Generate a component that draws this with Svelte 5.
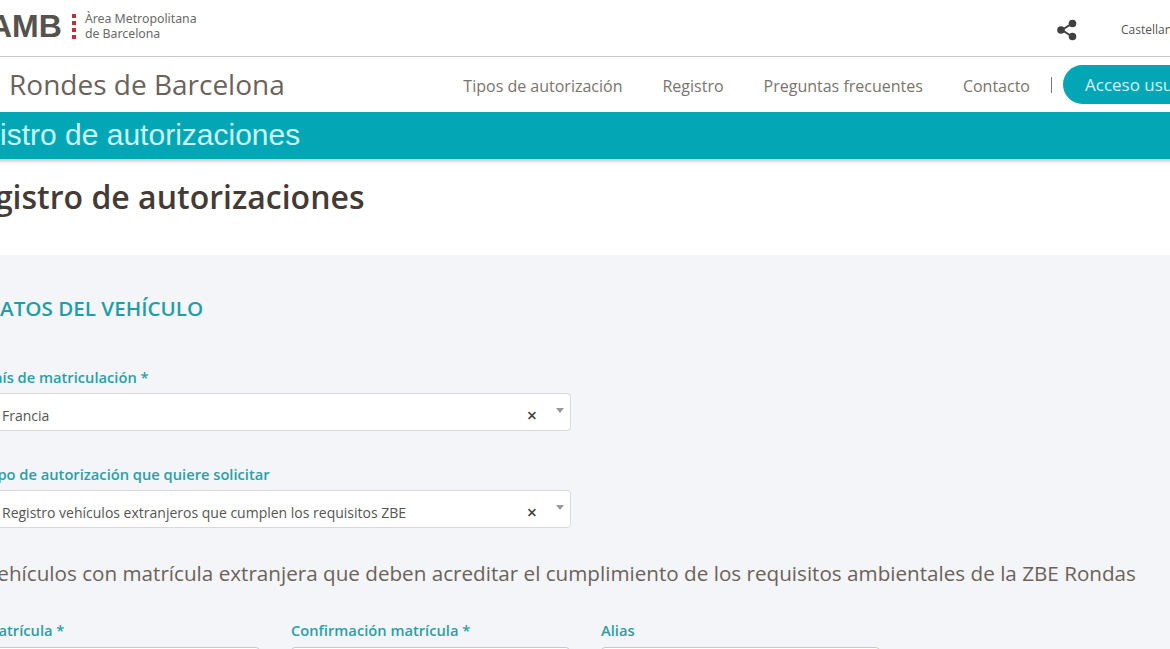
<script>
  const links = ['Tipos de autorización', 'Registro', 'Preguntas frecuentes', 'Contacto'];
  const selects = [
    { label: 'País de matriculación *', value: 'Francia' },
    { label: 'Tipo de autorización que quiere solicitar', value: 'Registro vehículos extranjeros que cumplen los requisitos ZBE' }
  ];
  const fields = ['Matrícula *', 'Confirmación matrícula *', 'Alias'];
</script>

<div class="page">
  <header class="top">
    <div class="logo">
      <span class="amb">AMB</span>
      <span class="dots"><i></i><i></i><i></i><i></i></span>
      <span class="amb-name">Àrea Metropolitana<br />de Barcelona</span>
    </div>
    <div class="top-right">
      <svg class="share" width="22" height="24" viewBox="0 0 22 24">
        <path d="M16 5.5 6 12l10 6.500" fill="none" stroke="#404040" stroke-width="2" />
        <circle cx="16.500" cy="5.500" r="3.800" fill="#404040" />
        <circle cx="5" cy="12" r="3.800" fill="#404040" />
        <circle cx="16.500" cy="18.500" r="3.800" fill="#404040" />
      </svg>
      <span class="lang">Castellano</span>
    </div>
  </header>

  <nav class="nav">
    <div class="brand">Rondes de Barcelona</div>
    <div class="links">
      {#each links as link}
        <span class="link">{link}</span>
      {/each}
      <span class="sep"></span>
      <span class="access">Acceso usuarios</span>
    </div>
  </nav>

  <div class="banner">Registro de autorizaciones</div>

  <section class="intro">
    <h1>Registro de autorizaciones</h1>
  </section>

  <main class="content">
    <h2>DATOS DEL VEHÍCULO</h2>

    {#each selects as s}
      <div class="field">
        <div class="label">{s.label}</div>
        <div class="select">
          <span class="value">{s.value}</span>
          <span class="clear">×</span>
          <span class="arrow"></span>
        </div>
      </div>
    {/each}

    <p class="note">Vehículos con matrícula extranjera que deben acreditar el cumplimiento de los requisitos ambientales de la ZBE Rondas</p>

    <div class="row">
      {#each fields as f}
        <div class="col">
          <div class="label">{f}</div>
          <div class="input"></div>
        </div>
      {/each}
    </div>
  </main>
</div>

<style>
  :global(body) {
    overflow: hidden;
    background: #fff;
  }

  .page {
    width: 1265px;
    height: 649px;
    margin-left: -44px;
    overflow: hidden;
    font-family: "Open Sans", "Noto Sans", sans-serif;
    color: #6b625b;
  }

  .top {
    display: flex;
    justify-content: space-between;
    align-items: center;
    height: 56px;
    border-bottom: 1px solid #c8c8c8;
    background: #fff;
  }

  .logo {
    display: flex;
    align-items: center;
    padding-left: 33px;
    padding-bottom: 4px;
  }

  .amb {
    font-family: "Liberation Sans", sans-serif;
    font-weight: 700;
    font-size: 32px;
    color: #56524e;
  }

  .dots {
    display: flex;
    flex-direction: column;
    gap: 3px;
    margin: 0 9px 0 10px;
  }

  .dots i {
    display: block;
    width: 4px;
    height: 4px;
    background: #c0303a;
  }

  .amb-name {
    font-size: 12.3px;
    line-height: 15px;
    color: #6a6a6a;
    font-family: "Noto Sans", sans-serif;
  }

  .top-right {
    display: flex;
    align-items: center;
    gap: 43px;
    width: 165px;
    padding-top: 3px;
  }

  .lang {
    font-size: 12px;
    color: #555;
  }

  .nav {
    display: flex;
    justify-content: space-between;
    align-items: center;
    height: 55px;
    background: #fff;
  }

  .brand {
    padding-left: 53px;
    padding-bottom: 2px;
    font-size: 28px;
    color: #6a635c;
  }

  .links {
    display: flex;
    align-items: center;
    font-size: 16px;
    color: #7a746e;
    margin-right: -1px;
  }

  .link {
    margin-right: 40px;
    padding-top: 2px;
  }

  .sep {
    width: 1px;
    height: 16px;
    background: #777;
    margin: 0 11px 0 -19px;
  }

  .access {
    width: 137px;
    height: 39px;
    display: flex;
    align-items: center;
    padding-left: 22px;
    background: #03a6b4;
    color: #c8f6fa;
    font-size: 17px;
    border-radius: 20px 0 0 20px;
    white-space: nowrap;
    overflow: hidden;
  }

  .banner {
    height: 47px;
    line-height: 45px;
    background: #03a6b4;
    box-shadow: 0 2px 4px rgba(0, 0, 0, 0.25);
    color: #c8f6fa;
    font-family: "Liberation Sans", sans-serif;
    font-size: 30px;
    text-indent: -11px;
    position: relative;
  }

  .intro {
    height: 96px;
    background: #fff;
  }

  h1 {
    margin: 0;
    padding-top: 16px;
    font-size: 32px;
    font-weight: 600;
    color: #443a36;
  }

  .content {
    background: #f4f5f8;
    height: 394px;
    padding: 39px 0 0 29px;
  }

  h2 {
    margin: 0 0 46px;
    font-size: 20.6px;
    font-weight: 600;
    color: #1f9ea8;
  }

  .field {
    margin-bottom: 34px;
  }

  .label {
    font-size: 14.7px;
    font-weight: 600;
    color: #2a9fa6;
    margin-bottom: 6px;
    line-height: 19px;
  }

  .select {
    display: flex;
    align-items: center;
    width: 586px;
    height: 38px;
    box-sizing: border-box;
    border: 1px solid #d8d8e0;
    border-radius: 4px;
    background: #fff;
    font-size: 14px;
    padding: 6px 0 0 16px;
    color: #555;
  }

  .value {
    flex: 1;
  }

  .clear {
    font-size: 18px;
    font-weight: 600;
    color: #444;
    margin-right: 19px;
  }

  .arrow {
    width: 0;
    height: 0;
    border-left: 4px solid transparent;
    border-right: 4px solid transparent;
    border-top: 5px solid #999;
    margin-right: 6px;
    margin-bottom: 10px;
  }

  .note {
    margin: -3px 0 34px;
    font-size: 20.65px;
    color: #6b625b;
    white-space: nowrap;
  }

  .row {
    display: flex;
    gap: 31px;
  }

  .col {
    width: 279px;
  }

  .col:first-child {
    width: 275px;
  }

  .col .label {
    margin-bottom: 7px;
  }

  .input {
    height: 38px;
    box-sizing: border-box;
    border: 1px solid #c8c8d0;
    border-radius: 4px;
    background: #fff;
  }
</style>
